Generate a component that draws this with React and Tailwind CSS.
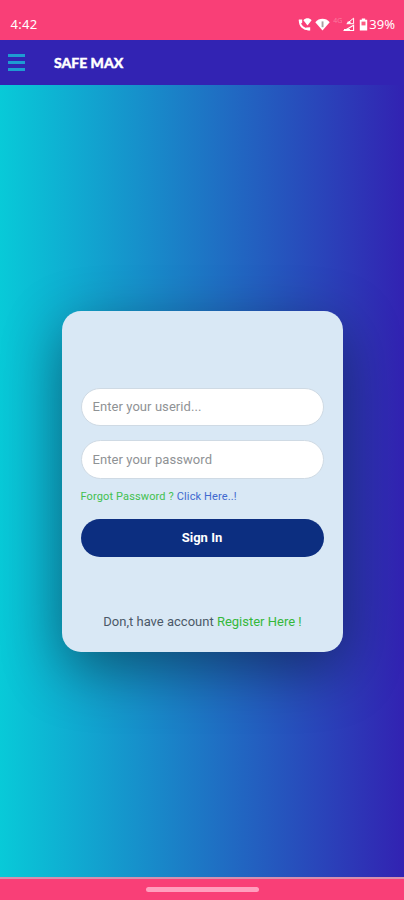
import { useState } from "react";

function CallIcon() {
  return (
    <svg width="14" height="15" viewBox="0 0 14 15" fill="none">
      <path
        d="M1.800 3.200C1.600 8.800 5.500 12.600 11.400 12.300"
        stroke="#fff"
        strokeWidth="1.900"
      />
      <path d="M.8 2.400h3.400v3.300L2.300 6.800C1.200 5.500.7 4 .8 2.400Z" fill="#fff" />
      <path d="M8.300 10.400l3.900-.200v3.200c-1.600.200-3.200-.200-4.700-1Z" fill="#fff" />
      <path d="M5.400 3.200c2.400-2.500 5.800-2.500 8.200 0L9.500 8.500Z" fill="#fff" />
    </svg>
  );
}

function WifiIcon() {
  return (
    <svg width="15" height="13" viewBox="0 0 15 13">
      <path d="M.3 4.200c3.600-4.500 10.800-4.500 14.400 0L7.500 12.400Z" fill="#fff" />
      <path d="M6.600 3.400h1.900v5.800H6.600Z" fill="#a99fa3" />
    </svg>
  );
}

function SignalIcon() {
  return (
    <svg width="12" height="15" viewBox="0 0 12 15" fill="none" stroke="#fff">
      <path d="M10.600 1.200v5.500H3.800Z" strokeWidth="1" />
      <path d="M4.500 4.600h3.100v1.900H4.500Z" fill="#fff" stroke="none" />
      <path d="M10.600 8.200v5.300H1.600Z" strokeWidth="1.100" />
      <path d="M1 12h6v2H1Z" fill="#fff" stroke="none" />
    </svg>
  );
}

function BatteryIcon() {
  return (
    <svg width="9" height="13" viewBox="0 0 9 13">
      <path d="M2.800.5h3.400v1.300h2v10.700H.8V1.800h2Z" fill="#fff" />
      <path d="M2.500 3.600h4v3.800h-4Z" fill="#fb5d83" />
    </svg>
  );
}

function StatusBar() {
  return (
    <div className="flex h-10 items-center justify-between bg-[#f93f77] pt-[9px] pr-[9px] pl-[10.5px] font-['Noto_Sans',sans-serif] text-[13px] text-white">
      <span className="tracking-[0.3px]">4:42</span>
      <div className="flex items-center">
        <CallIcon />
        <span className="ml-[3px] flex">
          <WifiIcon />
        </span>
        <span className="ml-[3px] mb-2 text-[7px] leading-none text-white/30">4G</span>
        <span className="ml-px flex">
          <SignalIcon />
        </span>
        <span className="ml-1 flex">
          <BatteryIcon />
        </span>
        <span className="ml-px">39%</span>
      </div>
    </div>
  );
}

function Header() {
  return (
    <header className="flex h-[45px] items-center bg-[#3223b3] pl-2">
      <button aria-label="Menu" className="flex w-[17px] flex-col gap-[4px]">
        <span className="h-[3px] bg-[#1e9bd2]" />
        <span className="h-[3px] bg-[#1e9bd2]" />
        <span className="h-[3px] bg-[#1e9bd2]" />
      </button>
      <h1 className="ml-[29px] font-['Lato',sans-serif] text-sm font-black text-white [-webkit-text-stroke:0.4px_white]">
        SAFE MAX
      </h1>
    </header>
  );
}

function LoginCard() {
  const [userId, setUserId] = useState("");
  const [password, setPassword] = useState("");

  const inputClass =
    "block w-full rounded-full border border-[#cfdae4] bg-white px-[11px] text-[13px] tracking-[0.07px] text-gray-700 outline-none placeholder:text-[#8f9295]";

  return (
    <form
      onSubmit={(e) => e.preventDefault()}
      className="h-[341px] w-[281px] rounded-[19px] bg-[#d9e8f5] px-[19px] pt-[77px] shadow-[0_18px_58px_rgba(0,0,0,0.42)]"
    >
      <input
        className={`${inputClass} h-[38px]`}
        placeholder="Enter your userid..."
        value={userId}
        onChange={(e) => setUserId(e.target.value)}
      />
      <input
        type="password"
        className={`${inputClass} mt-[14px] h-[39px] pt-px`}
        placeholder="Enter your password"
        value={password}
        onChange={(e) => setPassword(e.target.value)}
      />
      <p className="mt-[10px] text-[11px] leading-4 tracking-[0.13px] text-[#42c04f]">
        Forgot Password ? <a className="text-[#4169cf]">Click Here..!</a>
      </p>
      <button className="mt-[14px] block h-[38px] w-full rounded-full bg-[#0c2e80] text-[13px] font-bold text-white">
        Sign In
      </button>
      <p className="mt-[55px] pl-px text-center text-[13px] leading-5 text-[#4b5868]">
        Don,t have account <a className="text-[#35b83b]">Register Here !</a>
      </p>
    </form>
  );
}

export default function App() {
  return (
    <div className="flex h-screen flex-col overflow-hidden font-['Roboto',sans-serif]">
      <StatusBar />
      <Header />
      <main className="flex flex-1 items-center justify-center bg-linear-to-r/srgb from-[#08cad8] to-[#3222b2]">
        <LoginCard />
      </main>
      <div className="flex h-[23px] justify-center border-t-2 border-[#d78fae] bg-[#f93f77] pt-2">
        <div className="h-[5px] w-[113px] rounded-full bg-[#ff9fbe]" />
      </div>
    </div>
  );
}
